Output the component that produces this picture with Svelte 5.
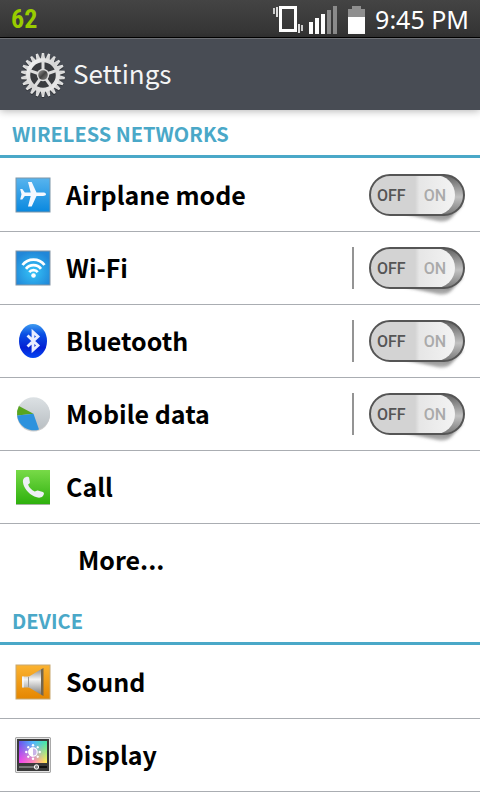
<script lang="ts">
	interface Item {
		id: string;
		label: string;
		icon?: string;
		toggle?: boolean;
		split?: boolean;
	}

	interface Section {
		title: string;
		items: Item[];
	}

	const sections: Section[] = [
		{
			title: 'WIRELESS NETWORKS',
			items: [
				{ id: 'airplane', label: 'Airplane mode', icon: 'airplane', toggle: true },
				{ id: 'wifi', label: 'Wi-Fi', icon: 'wifi', toggle: true, split: true },
				{ id: 'bluetooth', label: 'Bluetooth', icon: 'bluetooth', toggle: true, split: true },
				{ id: 'data', label: 'Mobile data', icon: 'data', toggle: true, split: true },
				{ id: 'call', label: 'Call', icon: 'call' },
				{ id: 'more', label: 'More...' }
			]
		},
		{
			title: 'DEVICE',
			items: [
				{ id: 'sound', label: 'Sound', icon: 'sound' },
				{ id: 'display', label: 'Display', icon: 'display' }
			]
		}
	];

	let enabled: Record<string, boolean> = $state({
		airplane: false,
		wifi: false,
		bluetooth: false,
		data: false
	});

	const teeth = Array.from({ length: 22 }, (_, i) => (i * 360) / 22);
	const spokes = [0, 72, 144, 216, 288];
	const rays = [0, 45, 90, 135, 180, 225, 270, 315];
</script>

<svelte:head>
	<title>Settings</title>
</svelte:head>

<svg class="defs" aria-hidden="true">
	<defs>
		<linearGradient id="blue" x1="0" y1="0" x2="0" y2="1">
			<stop offset="0" stop-color="#58b4ee" />
			<stop offset="1" stop-color="#0988df" />
		</linearGradient>
		<radialGradient id="wifi-glow" cx="0.5" cy="0.6" r="0.6">
			<stop offset="0" stop-color="#35c4f8" />
			<stop offset="1" stop-color="#2187d8" />
		</radialGradient>
		<linearGradient id="bt" x1="0" y1="0" x2="0" y2="1">
			<stop offset="0" stop-color="#3f9cf0" />
			<stop offset="0.3" stop-color="#0a50e4" />
			<stop offset="0.7" stop-color="#0420d4" />
			<stop offset="1" stop-color="#0648f4" />
		</linearGradient>
		<linearGradient id="pie" x1="0" y1="0" x2="0" y2="1">
			<stop offset="0" stop-color="#dce1e4" />
			<stop offset="1" stop-color="#b8bec2" />
		</linearGradient>
		<linearGradient id="green" x1="0" y1="0" x2="0" y2="1">
			<stop offset="0" stop-color="#78da48" />
			<stop offset="1" stop-color="#2db00c" />
		</linearGradient>
		<linearGradient id="orange" x1="0" y1="0" x2="0" y2="1">
			<stop offset="0" stop-color="#fbb331" />
			<stop offset="1" stop-color="#e58600" />
		</linearGradient>
		<linearGradient id="horn" x1="0" y1="0" x2="0" y2="1">
			<stop offset="0" stop-color="#888" />
			<stop offset="0.4" stop-color="#f4f4f4" />
			<stop offset="0.7" stop-color="#b8b8b8" />
			<stop offset="1" stop-color="#777" />
		</linearGradient>
		<linearGradient id="hue" x1="0" y1="0" x2="1" y2="0">
			<stop offset="0" stop-color="#6a52ee" />
			<stop offset="0.5" stop-color="#50b8ff" />
			<stop offset="1" stop-color="#48eca0" />
		</linearGradient>
		<linearGradient id="hue-low" x1="0" y1="0" x2="1" y2="0">
			<stop offset="0" stop-color="#f040f0" />
			<stop offset="0.5" stop-color="#ff86b8" />
			<stop offset="1" stop-color="#fff050" />
		</linearGradient>
		<linearGradient id="fade" x1="0" y1="0" x2="0" y2="1">
			<stop offset="0.1" stop-color="#000" />
			<stop offset="0.9" stop-color="#fff" />
		</linearGradient>
		<mask id="low-mask"><rect x="2" y="3" width="32" height="24" fill="url(#fade)" /></mask>
		<linearGradient id="metal" x1="0" y1="0" x2="1" y2="1">
			<stop offset="0" stop-color="#f8f8f8" />
			<stop offset="0.5" stop-color="#d4d4d4" />
			<stop offset="1" stop-color="#eeeeee" />
		</linearGradient>
		<linearGradient id="hub" x1="0" y1="0" x2="1" y2="1">
			<stop offset="0" stop-color="#999" />
			<stop offset="0.5" stop-color="#444" />
			<stop offset="1" stop-color="#888" />
		</linearGradient>
		<linearGradient id="groove" x1="0" y1="0" x2="0" y2="1">
			<stop offset="0" stop-color="#606060" />
			<stop offset="0.55" stop-color="#c2c2c2" />
			<stop offset="1" stop-color="#777" />
		</linearGradient>
		<linearGradient id="knob" x1="0" y1="0" x2="1" y2="0">
			<stop offset="0.53" stop-color="#d3d3d3" />
			<stop offset="0.58" stop-color="#e6e6e6" />
			<stop offset="1" stop-color="#f3f3f3" />
		</linearGradient>
		<linearGradient id="cast" x1="0" y1="0" x2="0" y2="1">
			<stop offset="0" stop-color="#444" stop-opacity="0.85" />
			<stop offset="1" stop-color="#666" stop-opacity="0.5" />
		</linearGradient>
		<filter id="soft" x="-20%" y="-20%" width="140%" height="140%">
			<feGaussianBlur stdDeviation="1.4" />
		</filter>
	</defs>
</svg>

<div class="screen">
	<div class="status-bar">
		<span class="battery-level">62</span>
		<svg class="status-icons" viewBox="0 0 94 30" aria-hidden="true">
			<rect x="7.5" y="3.5" width="15" height="23" fill="none" stroke="#fff" stroke-width="3" />
			<path d="M4 3v10M26 20v9" stroke="#ddd" stroke-width="2" />
			<path d="M1 4v6M29 21v6" stroke="#ccc" stroke-width="2" />
			<path d="M36 18h4v12h-4zM42 14h4v16h-4zM48 10h4v20h-4z" fill="#fff" />
			<path d="M54 6h4v24h-4zM60 2h4v28h-4z" fill="#8b8b8b" />
			<path d="M75 5h4V2h9v3h4v8H75z" fill="#8f8f8f" />
			<path d="M75 13h17v17H75z" fill="#fff" />
		</svg>
		<time class="clock">9:45 PM</time>
	</div>

	<header class="title-bar">
		<svg class="gear" viewBox="-24 -24 48 48" aria-hidden="true">
			<g fill="#25282c" opacity="0.7" transform="translate(0 1)">
				{#each teeth as angle}
					<path d="M-2.6-15 -1.2-22H1.2L2.6-15z" transform="rotate({angle})" />
				{/each}
			</g>
			<circle r="14" fill="#3a3c40" />
			<g fill="url(#metal)">
				{#each teeth as angle}
					<path d="M-2.4-15 -1.1-22H1.1L2.4-15z" transform="rotate({angle})" />
				{/each}
			</g>
			<circle r="14.8" fill="none" stroke="url(#metal)" stroke-width="4" />
			{#each spokes as angle}
				<path d="M-1.5-5h3v-9h-3z" fill="#dedede" transform="rotate({angle})" />
			{/each}
			<circle r="6.2" fill="#ddd" />
			<circle r="4.8" fill="url(#hub)" />
		</svg>
		<h1>Settings</h1>
	</header>

	<main>
		{#each sections as section}
			<section>
				<h2>{section.title}</h2>
				<ul>
					{#each section.items as item (item.id)}
						<li>
							<a href="#{item.id}" class:plain={!item.icon}>
								{#if item.icon}
									<svg class="icon" viewBox="0 0 36 36" aria-hidden="true">
										{#if item.icon === 'airplane'}
											<rect x="1" y="1" width="34" height="34" fill="url(#blue)" stroke="#7d95a8" />
											<path
												d="M31 17.2c0-1.2-1.3-1.7-3-1.7h-6.5L16.7 5H13l2.7 10.5H9.8L7.3 12H5.2l1.3 5.2L5.2 22.4h2.1l2.5-3.5h5.9L13 29.4h3.7l4.8-10.5H28c1.7 0 3-.5 3-1.7z"
												fill="#f5f8ff"
											/>
										{:else if item.icon === 'wifi'}
											<rect x="1" y="1" width="34" height="34" fill="url(#wifi-glow)" stroke="#8494a4" />
											<g fill="none" stroke="#fff" stroke-width="2.8">
												<path d="M7.5 15a14 14 0 0 1 22 0" />
												<path d="M11 18.8a9.5 9.5 0 0 1 15 0" />
												<path d="M14.3 22.2a5.4 5.4 0 0 1 8.4 0" />
											</g>
											<circle cx="18.5" cy="25.5" r="2.3" fill="#fff" />
										{:else if item.icon === 'bluetooth'}
											<ellipse cx="18" cy="18" rx="14" ry="17" fill="url(#bt)" />
											<path
												d="M12.5 12.5 23 22.500l-5 4.500V9l5 4.500L12.500 23.500"
												fill="none"
												stroke="#e8eeff"
												stroke-width="2.8"
											/>
										{:else if item.icon === 'data'}
											<circle cx="18.5" cy="19" r="16.5" fill="#aaa" opacity="0.6" />
											<circle cx="18.5" cy="17.8" r="16.5" fill="url(#pie)" />
											<path d="M18.5 17.8 3.9 10A16.5 16.5 0 0 0 2.1 19.6z" fill="#58a520" />
											<path d="M18.5 17.8 2.1 19.6A16.5 16.5 0 0 0 24 33.4z" fill="#2d92dd" />
										{:else if item.icon === 'call'}
											<rect x="1" y="1" width="34" height="34.5" fill="url(#green)" />
											<path d="M1 35.5h34" stroke="#a4b4a0" />
											<path
												d="M9 9.2c1.5-1.5 4.5-2.1 5.1-.4l.8 4.7c0 1-1 1.3-1.8 2 .9 3 3.5 5.7 6.6 6.9 1.2-.1 1.8-1.2 3-1l5.2 1.7c1.7.7 1.2 2.8-.2 4.1-2 2-5 1.7-8.3.3C13.5 24.7 8.6 19 8 13.5c-.2-1.8.1-3.3 1-4.3z"
												fill="#eef0f6"
											/>
										{:else if item.icon === 'sound'}
											<rect x="1" y="1" width="34" height="34" fill="url(#orange)" stroke="#c7a870" />
											<path d="M7 12.5h7L27.5 4.5v27L14 23.5H7z" fill="url(#horn)" />
											<path d="M26 5.5 28.5 4v28L26 30.5z" fill="#74664e" />
											<path d="M7 12.5h2v11H7z" fill="#fff" opacity="0.6" />
											<path d="M13.5 13v10" stroke="#999" />
										{:else}
											<rect x="0.5" y="0.5" width="35" height="35" rx="1" fill="#3a3a3a" stroke="#a9a9a9" />
											<rect x="1.5" y="1.5" width="33" height="33" fill="none" stroke="#e4e4e4" />
											<rect x="4" y="4" width="28" height="22" fill="url(#hue)" />
											<rect x="4" y="4" width="28" height="22" fill="url(#hue-low)" mask="url(#low-mask)" />
											<circle cx="18" cy="15" r="4.2" fill="#c8b4e8" stroke="#fff" stroke-width="1.2" />
											<path d="M18 10.5a4.5 4.5 0 0 0 0 9z" fill="#fff" />
											{#each rays as angle}
												<circle cx="18" cy="8.3" r="1.2" fill="#fff" transform="rotate({angle} 18 15)" />
											{/each}
											<path d="M4 30h28" stroke="#111" stroke-width="2" />
											<path d="M4 30h17" stroke="#ddd" />
											<circle cx="21.5" cy="30" r="2.2" fill="#888" stroke="#fff" />
										{/if}
									</svg>
								{/if}
								<span>{item.label}</span>
							</a>
							{#if item.split}
								<span class="divider"></span>
							{/if}
							{#if item.toggle}
								<label class="switch" class:on={enabled[item.id]}>
									<input
										type="checkbox"
										role="switch"
										aria-label={item.label}
										bind:checked={enabled[item.id]}
									/>
									<svg viewBox="0 0 96 52" aria-hidden="true">
										<path d="M36 40l32 7q9 2 14-3l12-14z" fill="url(#cast)" filter="url(#soft)" />
										<rect x="1" y="1" width="94" height="40" rx="20" fill="url(#groove)" />
										<rect x="1" y="1" width="85" height="40" rx="20" fill="url(#knob)" />
										<rect x="1" y="1" width="94" height="40" rx="20" fill="none" stroke="#555" stroke-width="2" />
									</svg>
									<span class="off-text">OFF</span>
									<span class="on-text">ON</span>
								</label>
							{/if}
						</li>
					{/each}
				</ul>
			</section>
		{/each}
	</main>
</div>

<style>
	:global(body) {
		margin: 0;
		background: #fff;
	}

	.screen {
		min-height: 100vh;
		background: #fff;
		color: #000;
		font-family: 'Noto Sans CJK KR', 'Noto Sans', sans-serif;
	}

	.defs {
		position: absolute;
		width: 0;
		height: 0;
	}

	.status-bar {
		display: flex;
		align-items: center;
		box-sizing: border-box;
		height: 38px;
		padding: 0 11px;
		border-bottom: 1px solid #000;
		background: linear-gradient(#444, #333);
		color: #fff;
	}

	.battery-level {
		flex: 1;
		color: #99cc00;
		font-family: 'Liberation Sans Narrow', 'Roboto Condensed', 'DejaVu Sans Condensed', sans-serif;
		font-size: 26px;
		font-weight: 700;
		line-height: 38px;
	}

	.status-icons {
		width: 94px;
		height: 30px;
		margin-right: 8px;
	}

	.clock {
		font-family: 'Noto Sans', sans-serif;
		font-size: 25px;
		line-height: 38px;
	}

	.title-bar {
		position: relative;
		display: flex;
		align-items: center;
		gap: 6px;
		box-sizing: border-box;
		height: 72px;
		padding-left: 19px;
		border-top: 1px solid #6c6f74;
		background: #484c54;
		box-shadow: 0 1px 8px rgba(0, 0, 0, 0.3);
		color: #f4f4f4;
	}

	.gear {
		width: 48px;
		height: 48px;
	}

	h1 {
		margin: 0;
		padding-bottom: 4px;
		font-size: 26px;
		font-weight: 400;
		line-height: 36px;
	}

	h2 {
		margin: 0;
		padding: 2px 12px 0;
		border-bottom: 3px solid #4aa8c8;
		color: #4aa8c8;
		font-size: 20px;
		font-weight: 700;
		line-height: 43px;
	}

	ul {
		margin: 0;
		padding: 0;
		border-bottom: 1px solid #aaadb2;
		list-style: none;
	}

	section:first-child ul {
		border-color: transparent;
	}

	li {
		display: flex;
		align-items: center;
		box-sizing: border-box;
		height: 73px;
		padding-right: 15px;
	}

	li + li {
		border-top: 1px solid #aaadb2;
	}

	a {
		display: flex;
		flex: 1;
		align-items: center;
		gap: 15px;
		height: 100%;
		padding-left: 15px;
		color: #000;
		font-size: 25px;
		font-weight: 700;
		line-height: 36px;
		text-decoration: none;
	}

	a span {
		padding-bottom: 2px;
	}

	a.plain {
		padding-left: 78px;
	}

	.icon {
		width: 36px;
		height: 36px;
	}

	.divider {
		width: 2px;
		height: 42px;
		margin-right: 15px;
		background: #949494;
	}

	.switch {
		position: relative;
		display: flex;
		align-items: center;
		gap: 18px;
		box-sizing: border-box;
		width: 96px;
		height: 42px;
		padding: 2px 0 0 8px;
		font-family: Roboto, sans-serif;
		font-size: 16px;
		font-weight: 500;
		line-height: 20px;
		cursor: pointer;
	}

	.switch svg {
		position: absolute;
		top: 0;
		left: 0;
		width: 96px;
		height: 52px;
	}

	.switch input {
		position: absolute;
		inset: 0;
		width: 100%;
		height: 100%;
		margin: 0;
		opacity: 0;
	}

	.switch span {
		position: relative;
	}

	.off-text {
		color: #555;
	}

	.on-text {
		color: #aaa;
	}

	.on .off-text {
		color: #aaa;
	}

	.on .on-text {
		color: #2f94b8;
	}
</style>
